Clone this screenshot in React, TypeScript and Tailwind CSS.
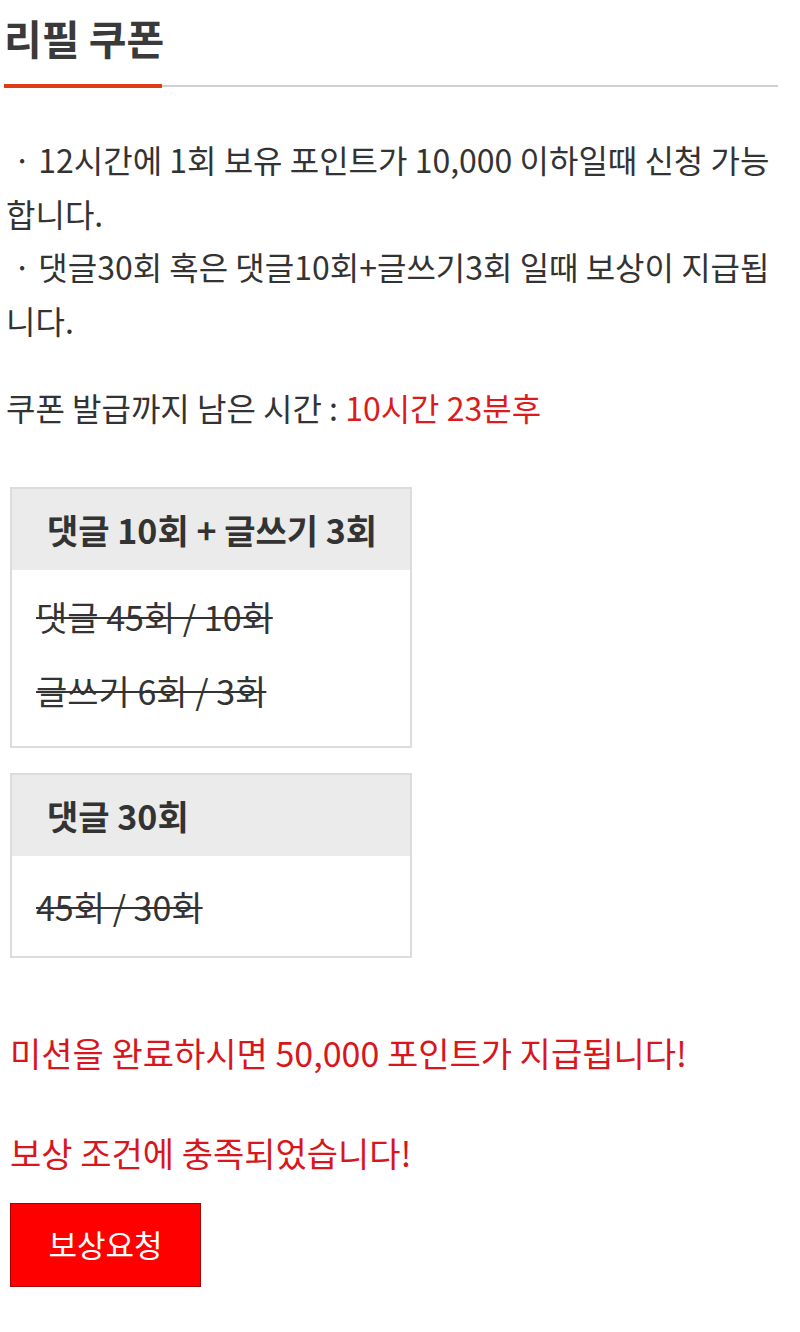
export default function App() {
  const font = { fontFamily: '"Noto Sans CJK KR", "Noto Sans", sans-serif' }
  return (
    <div className="bg-white min-h-[1332px] w-[800px] text-[#333]" style={font}>
      <div className="pt-[12px]">
        <h1 className="pl-[4px] text-[41px] font-bold leading-[50px] text-[#3a3a3a]">리필 쿠폰</h1>
        <div className="flex items-center ml-[4px] w-[774px] mt-[22px]">
          <div className="w-[158px] h-[4px] bg-[#dc3d12]" />
          <div className="flex-1 h-[2px] bg-[#d0d0d0]" />
        </div>
      </div>

      <div className="mt-[45px] pl-[6px] pr-[12px] text-[32px] leading-[53.5px]">
        <p>&nbsp;· 12시간에 1회 보유 포인트가 10,000 이하일때 신청 가능합니다.</p>
        <p>&nbsp;· 댓글30회 혹은 댓글10회+글쓰기3회 일때 보상이 지급됩니다.</p>
        <p className="mt-[34px]">
          쿠폰 발급까지 남은 시간 : <span className="text-[#dc1c1c]">10시간 23분후</span>
        </p>
      </div>

      <div className="mt-[52px] ml-[10px] w-[402px] flex flex-col gap-[25px]">
        <div className="border-2 border-[#dcdcdc]">
          <div className="bg-[#ebebeb] h-[81px] flex items-center pl-[35px] text-[34px] font-bold">
            댓글 10회 + 글쓰기 3회
          </div>
          <div className="px-[24px] pt-[10px] pb-[18px] text-[34px] leading-[74px] line-through decoration-2">
            <p>댓글 45회 / 10회</p>
            <p>글쓰기 6회 / 3회</p>
          </div>
        </div>

        <div className="border-2 border-[#dcdcdc]">
          <div className="bg-[#ebebeb] h-[81px] flex items-center pl-[35px] text-[34px] font-bold">
            댓글 30회
          </div>
          <div className="px-[24px] pt-[18px] pb-[16px] text-[34px] leading-[66px] line-through decoration-2">
            <p>45회 / 30회</p>
          </div>
        </div>
      </div>

      <div className="mt-[65px] pl-[10px] text-[34px] leading-[60px] text-[#d9161c]">
        <p>미션을 완료하시면 50,000 포인트가 지급됩니다!</p>
        <p className="mt-[40px]">보상 조건에 충족되었습니다!</p>
      </div>

      <div className="pl-[10px] mt-[20px]">
        <button className="w-[191px] h-[84px] bg-[#ff0000] border border-[#a80000] text-white text-[31px]">
          보상요청
        </button>
      </div>
    </div>
  )
}
